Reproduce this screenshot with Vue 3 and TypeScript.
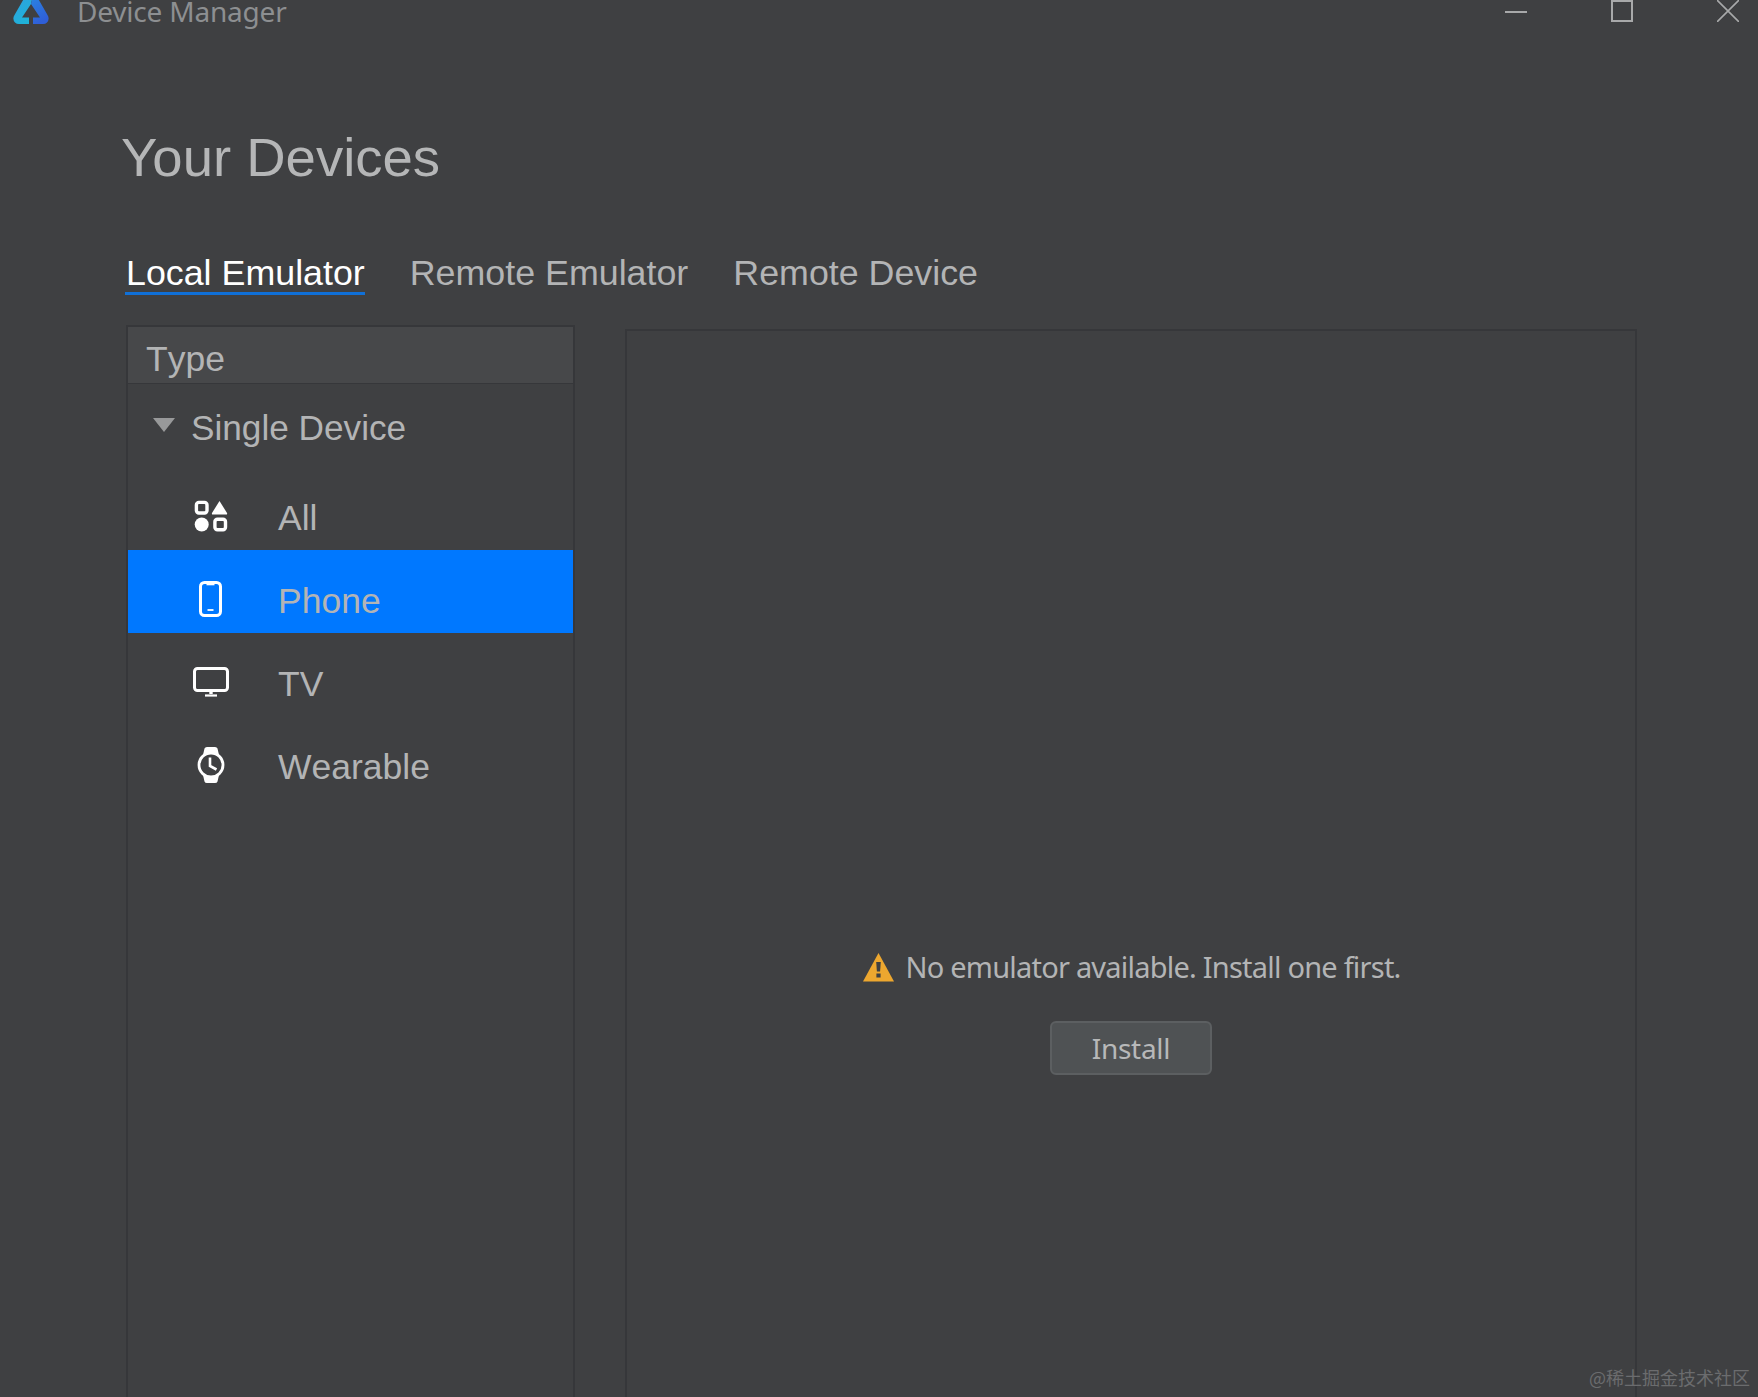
<script setup lang="ts">
const tabs = [
  { label: "Local Emulator", active: true },
  { label: "Remote Emulator", active: false },
  { label: "Remote Device", active: false },
];

const deviceTypes = [
  { id: "all", label: "All", selected: false },
  { id: "phone", label: "Phone", selected: true },
  { id: "tv", label: "TV", selected: false },
  { id: "wearable", label: "Wearable", selected: false },
];
</script>

<template>
  <div class="window">
    <header class="titlebar">
      <svg class="logo" viewBox="0 0 38 30" width="38" height="30">
        <defs>
          <linearGradient id="logoLeft" x1="0" y1="0" x2="0.6" y2="1">
            <stop offset="0" stop-color="#2f9fe0" />
            <stop offset="1" stop-color="#1fb3d8" />
          </linearGradient>
          <linearGradient id="logoRight" x1="0" y1="0" x2="0.4" y2="1">
            <stop offset="0" stop-color="#2a86e0" />
            <stop offset="1" stop-color="#2f5fd8" />
          </linearGradient>
        </defs>
        <path d="M14 0 L2.5 20 Q0 24 3 27.5 Q4.5 29 7 29 L17 29 L17 22.5 L10 22.5 L19 9 L21 0 Z" fill="url(#logoLeft)" />
        <path d="M19 9 L28 22.5 L21 22.5 L21 29 L31 29 Q33.5 29 35 27.5 Q38 24 35.5 20 L24 0 L21 0 Z" fill="url(#logoRight)" />
      </svg>
      <span class="title">Device Manager</span>
      <div class="window-controls">
        <svg viewBox="0 0 22 22" width="22" height="22">
          <path d="M0 12h22" stroke="#a8a9aa" stroke-width="2" />
        </svg>
        <svg viewBox="0 0 22 22" width="22" height="22">
          <path d="M1 1h20v20H1z" stroke="#a8a9aa" stroke-width="2" fill="none" />
        </svg>
        <svg viewBox="0 0 22 22" width="22" height="22">
          <path d="M0 0L22 22M22 0L0 22" stroke="#a8a9aa" stroke-width="1.6" fill="none" />
        </svg>
      </div>
    </header>

    <main class="content">
      <h1>Your Devices</h1>

      <nav class="tabs">
        <span v-for="tab in tabs" :key="tab.label" :class="['tab', { active: tab.active }]">
          {{ tab.label }}
        </span>
      </nav>

      <section class="panels">
        <aside class="type-panel">
          <div class="type-header">Type</div>
          <div class="group-row">
            <span class="caret"></span>
            <span>Single Device</span>
          </div>
          <div
            v-for="item in deviceTypes"
            :key="item.id"
            :class="['type-row', { selected: item.selected }]"
          >
            <span class="type-icon">
              <svg v-if="item.id === 'all'" viewBox="0 0 34 32" width="34" height="32" fill="#fff">
                <rect x="2.4" y="2.4" width="10.6" height="10.6" rx="2.5" fill="none" stroke="#fff" stroke-width="3.4" />
                <path d="M25.5 1 L33 13 Q33.5 14.5 32 14.5 L19 14.5 Q17.5 14.5 18 13 Z" />
                <circle cx="7.7" cy="24.5" r="7" />
                <rect x="20.9" y="19.2" width="10.6" height="10.6" rx="2.5" fill="none" stroke="#fff" stroke-width="3.4" />
              </svg>
              <svg v-else-if="item.id === 'phone'" viewBox="0 0 24 36" width="24" height="36" fill="none" stroke="#fff">
                <rect x="1.5" y="1.5" width="20" height="33" rx="4" stroke-width="3" />
                <path d="M7.5 3h8" stroke-width="2.6" />
                <path d="M8.5 29h6" stroke-width="1.8" />
              </svg>
              <svg v-else-if="item.id === 'tv'" viewBox="0 0 36 30" width="36" height="30" fill="none" stroke="#fff">
                <rect x="1.5" y="1.5" width="33" height="22" rx="3" stroke-width="3" />
                <path d="M18 24v3" stroke-width="3.4" />
                <path d="M12 28.5h12" stroke-width="2.2" />
              </svg>
              <svg v-else viewBox="0 0 28 36" width="28" height="36">
                <path d="M6 8 L7.5 1.5 Q8 0 10 0 L18 0 Q20 0 20.5 1.5 L22 8 Z M6 28 L22 28 L20.5 34.5 Q20 36 18 36 L10 36 Q8 36 7.5 34.5 Z" fill="#fff" />
                <circle cx="14" cy="18" r="12" fill="#3f4042" stroke="#fff" stroke-width="2.8" />
                <path d="M13 10.5v8.5l6.5 3.5" fill="none" stroke="#fff" stroke-width="2.6" />
              </svg>
            </span>
            <span class="type-label">{{ item.label }}</span>
          </div>
        </aside>

        <section class="detail-panel">
          <p class="notice">
            <svg viewBox="0 0 31 30" width="31" height="30">
              <path d="M15.5 1 L31 29.5 L0 29.5 Z" fill="#eda72f" />
              <path d="M13.2 10h4.6l-.7 9.5h-3.2z" fill="#3f4042" />
              <rect x="13.4" y="21.5" width="4.2" height="4" fill="#3f4042" />
            </svg>
            <span>No emulator available. Install one first.</span>
          </p>
          <button class="install" type="button">Install</button>
        </section>
      </section>
    </main>

    <span class="watermark">@稀土掘金技术社区</span>
  </div>
</template>

<style>
body {
  margin: 0;
  background: #3f4042;
}
</style>

<style scoped>
.window {
  position: relative;
  width: 1758px;
  height: 1397px;
  overflow: hidden;
  display: flex;
  flex-direction: column;
  background: #3f4042;
  font-family: "Liberation Sans", Arial, sans-serif;
}

.titlebar {
  flex: none;
  height: 26px;
  display: flex;
  align-items: flex-end;
  padding-left: 12px;
}

.logo {
  flex: none;
  margin-bottom: 1px;
}

.title {
  margin-left: 27px;
  font-family: "Noto Sans", sans-serif;
  font-size: 28px;
  line-height: 30px;
  letter-spacing: -0.2px;
  color: #8d8f91;
  white-space: nowrap;
}

.window-controls {
  margin-left: auto;
  margin-right: 19px;
  align-self: flex-start;
  display: flex;
  gap: 84px;
}

.window-controls svg {
  display: block;
  overflow: hidden;
}

.content {
  flex: 1;
  min-height: 0;
  display: flex;
  flex-direction: column;
  padding: 100px 121px 0 121px;
}

h1 {
  margin: 0;
  font-size: 54.5px;
  line-height: 64px;
  font-weight: 400;
  color: #b5b6b7;
}

.tabs {
  display: flex;
  gap: 44px;
  margin: 65px 0 0 4px;
}

.tab {
  padding-left: 1px;
  font-size: 35.8px;
  line-height: 37px;
  color: #b3b4b5;
  border-bottom: 3px solid transparent;
}

.tab.active {
  color: #fff;
  border-bottom-color: #1070d8;
}

.panels {
  flex: 1;
  min-height: 0;
  display: flex;
  align-items: stretch;
  gap: 50px;
  margin: 30px 0 0 5px;
}

.type-panel {
  flex: none;
  width: 445px;
  border: 2px solid #36373a;
  border-bottom: 0;
  color: #b3b4b5;
  font-size: 35.5px;
  font-kerning: none;
}

.type-header {
  height: 56px;
  padding-left: 18px;
  line-height: 64px;
  background: #47484a;
  border-bottom: 1px solid #36373a;
}

.group-row {
  height: 83px;
  box-sizing: border-box;
  display: flex;
  align-items: center;
  padding: 5px 0 0 25px;
  gap: 16px;
  font-size: 35.2px;
}

.caret {
  width: 0;
  height: 0;
  margin-top: -6px;
  border-left: 11px solid transparent;
  border-right: 11px solid transparent;
  border-top: 14px solid #98999a;
}

.type-row {
  height: 83px;
  box-sizing: border-box;
  display: flex;
  align-items: center;
  padding-top: 19px;
}

.type-row.selected {
  background: #0078ff;
}

.type-icon {
  flex: none;
  width: 36px;
  margin-left: 65px;
  margin-top: -5px;
  display: flex;
  justify-content: center;
}

.type-icon svg {
  display: block;
}

.type-label {
  margin-left: 49px;
}

.detail-panel {
  flex: 1;
  margin-top: 4px;
  border: 2px solid #36373a;
  border-bottom: 0;
  display: flex;
  flex-direction: column;
  align-items: center;
  padding-top: 617px;
}

.notice {
  margin: 0 0 0 2px;
  display: flex;
  align-items: center;
  gap: 11px;
  font-family: "Noto Sans", sans-serif;
  font-size: 29px;
  line-height: 38px;
  letter-spacing: -0.78px;
  color: #b3b4b5;
  white-space: nowrap;
}

.install {
  margin-top: 35px;
  width: 162px;
  height: 54px;
  padding: 0;
  border: 2px solid #5c5f61;
  border-radius: 6px;
  background: #4f5254;
  color: #b7b8b9;
  font-family: "Noto Sans", sans-serif;
  font-size: 28px;
  letter-spacing: -0.3px;
}

.watermark {
  position: absolute;
  right: 8px;
  bottom: 9px;
  font-family: "Noto Sans CJK SC", "Liberation Sans", sans-serif;
  font-size: 18px;
  line-height: 22px;
  color: #6b6c6e;
}
</style>
